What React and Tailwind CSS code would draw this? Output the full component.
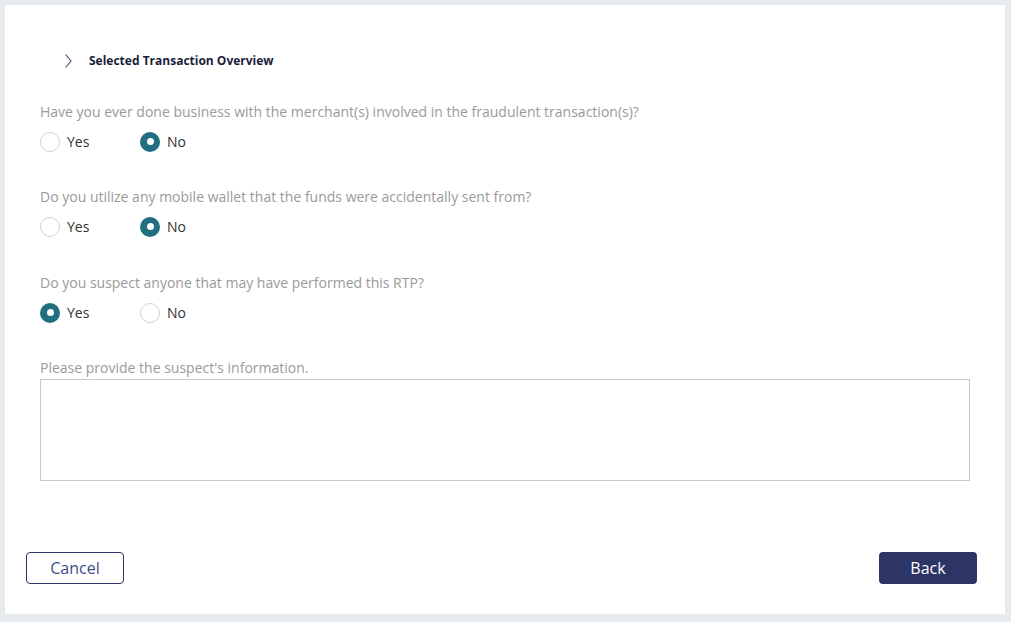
import React, { useState } from 'react';

const questions = [
    { id: 'merchant', text: 'Have you ever done business with the merchant(s) involved in the fraudulent transaction(s)?', value: 'no' },
    { id: 'wallet', text: 'Do you utilize any mobile wallet that the funds were accidentally sent from?', value: 'no' },
    { id: 'suspect', text: 'Do you suspect anyone that may have performed this RTP?', value: 'yes' },
];

const Radio = ({ checked, label, onClick }) => (
    <button type="button" onClick={onClick} className="flex items-center gap-[7px] w-[100px] text-left">
        {checked ? (
            <span className="w-5 h-5 rounded-full bg-[#1f6f80] flex items-center justify-center">
                <span className="w-[7px] h-[7px] rounded-full bg-white" />
            </span>
        ) : (
            <span className="w-5 h-5 rounded-full border border-[#cdd3da] bg-white" />
        )}
        <span className="text-[14px] text-[#333333]">{label}</span>
    </button>
);

const App = () => {
    const [answers, setAnswers] = useState(
        Object.fromEntries(questions.map((q) => [q.id, q.value]))
    );
    const [info, setInfo] = useState('');

    return (
        <div className="w-[1011px] h-[622px] bg-[#e6ebee] pt-[5px] pl-[5px] pr-[6px] pb-[8px]" style={{ fontFamily: '"Open Sans", sans-serif' }}>
            <div className="bg-white h-full flex flex-col">
                <div className="flex items-center pl-[59px] pt-[40px] h-[72px]">
                    <svg width="10" height="16" viewBox="0 0 10 16" className="mr-[15px]">
                        <path d="M1.5 1.5 L7 8 L1.5 14.5" fill="none" stroke="#44506b" strokeWidth="1.1" />
                    </svg>
                    <span className="text-[12px] font-bold text-[#1b1d3a]">Selected Transaction Overview</span>
                </div>

                <div className="px-[35px] pt-[25px]">
                    {questions.map((q, i) => (
                        <div key={q.id} className={i === 1 ? 'mb-[36px]' : 'mb-[35px]'}>
                            <p className="text-[14px] text-[#9a9a9a] leading-[20px]">{q.text}</p>
                            <div className="flex mt-[9px]">
                                <Radio
                                    label="Yes"
                                    checked={answers[q.id] === 'yes'}
                                    onClick={() => setAnswers({ ...answers, [q.id]: 'yes' })}
                                />
                                <Radio
                                    label="No"
                                    checked={answers[q.id] === 'no'}
                                    onClick={() => setAnswers({ ...answers, [q.id]: 'no' })}
                                />
                            </div>
                        </div>
                    ))}

                    <p className="text-[14px] text-[#9a9a9a] leading-[20px]">Please provide the suspect's information.</p>
                    <textarea
                        value={info}
                        onChange={(e) => setInfo(e.target.value)}
                        className="mt-[1px] block w-[930px] h-[102px] border border-[#c5c9d0] resize-none focus:outline-none"
                    />
                </div>

                <div className="mt-auto flex justify-between pl-[21px] pr-[28px] pb-[30px]">
                    <button type="button" className="w-[98px] h-[32px] rounded-[4px] border border-[#2d3566] text-[16px] text-[#3e4c8c]">Cancel</button>
                    <button type="button" className="w-[98px] h-[32px] rounded-[4px] bg-[#2d3566] text-[16px] text-white">Back</button>
                </div>
            </div>
        </div>
    );
};

export default App;
